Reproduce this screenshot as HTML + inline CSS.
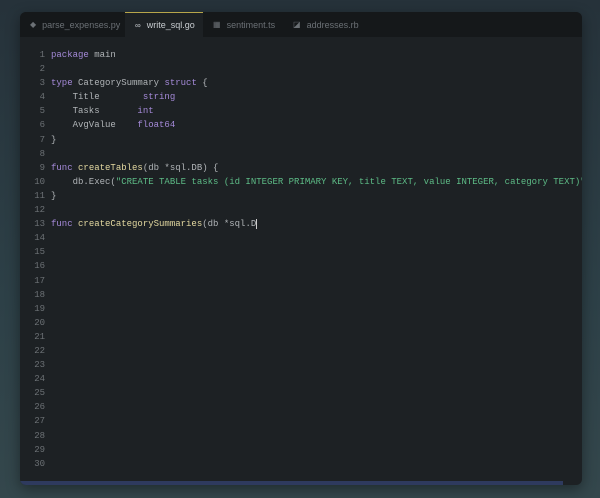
<!DOCTYPE html>
<html><head><style>
body{margin:0;width:600px;height:498px;background:linear-gradient(180deg,#26323a 0%,#2d4047 60%,#34474c 100%);overflow:hidden;position:relative;font-family:"Liberation Sans",sans-serif}
.win{position:absolute;left:20px;top:12px;width:562px;height:473px;background:#1d2124;border-radius:6px;overflow:hidden;box-shadow:0 4px 14px rgba(0,0,0,.4)}
.tabs{height:25px;background:#15181a;display:flex;font-size:9px;color:#6b7075}
.tab{padding-left:10px;display:flex;align-items:center;gap:6px;height:25px;box-sizing:border-box}
.tab.a{background:#1d2124;color:#c8ccd0;border-top:1px solid #b8a64a}
.code{position:absolute;top:36px;left:0;right:0;font-family:"Liberation Mono",monospace;font-size:9px;line-height:14.1px;color:#b0b4b7;white-space:pre}
.ln{display:inline-block;width:25px;text-align:right;color:#6c7175;margin-right:6px}
.k{color:#a58ad9}.s{color:#5dbb86}.f{color:#e3d8a0}.t{color:#a58ad9}
.bar{position:absolute;left:0;bottom:0;width:543px;height:4px;background:#2e3a5e}
</style></head><body>
<div class="win">
<div class="tabs">
<div class="tab" style="width:105px"><span style="font-size:8px">◆</span>parse_expenses.py</div>
<div class="tab a" style="width:78px"><span style="font-size:8px">∞</span>write_sql.go</div>
<div class="tab" style="width:80px"><span style="font-size:8px">▦</span>sentiment.ts</div>
<div class="tab" style="width:90px"><span style="font-size:8px">◪</span>addresses.rb</div>
</div>
<div class="code"><span class="ln">1</span><span class="k">package</span> main
<span class="ln">2</span>
<span class="ln">3</span><span class="k">type</span> CategorySummary <span class="k">struct</span> {
<span class="ln">4</span>    Title        <span class="t">string</span>
<span class="ln">5</span>    Tasks       <span class="t">int</span>
<span class="ln">6</span>    AvgValue    <span class="t">float64</span>
<span class="ln">7</span>}
<span class="ln">8</span>
<span class="ln">9</span><span class="k">func</span> <span class="f">createTables</span>(db *sql.DB) {
<span class="ln">10</span>    db.Exec(<span class="s">"CREATE TABLE tasks (id INTEGER PRIMARY KEY, title TEXT, value INTEGER, category TEXT)"</span>)
<span class="ln">11</span>}
<span class="ln">12</span>
<span class="ln">13</span><span class="k">func</span> <span class="f">createCategorySummaries</span>(db *sql.D<span style="border-left:1px solid #ccc"></span>
<span class="ln">14</span>
<span class="ln">15</span>
<span class="ln">16</span>
<span class="ln">17</span>
<span class="ln">18</span>
<span class="ln">19</span>
<span class="ln">20</span>
<span class="ln">21</span>
<span class="ln">22</span>
<span class="ln">23</span>
<span class="ln">24</span>
<span class="ln">25</span>
<span class="ln">26</span>
<span class="ln">27</span>
<span class="ln">28</span>
<span class="ln">29</span>
<span class="ln">30</span></div>
<div class="bar"></div>
</div>
</body></html>
